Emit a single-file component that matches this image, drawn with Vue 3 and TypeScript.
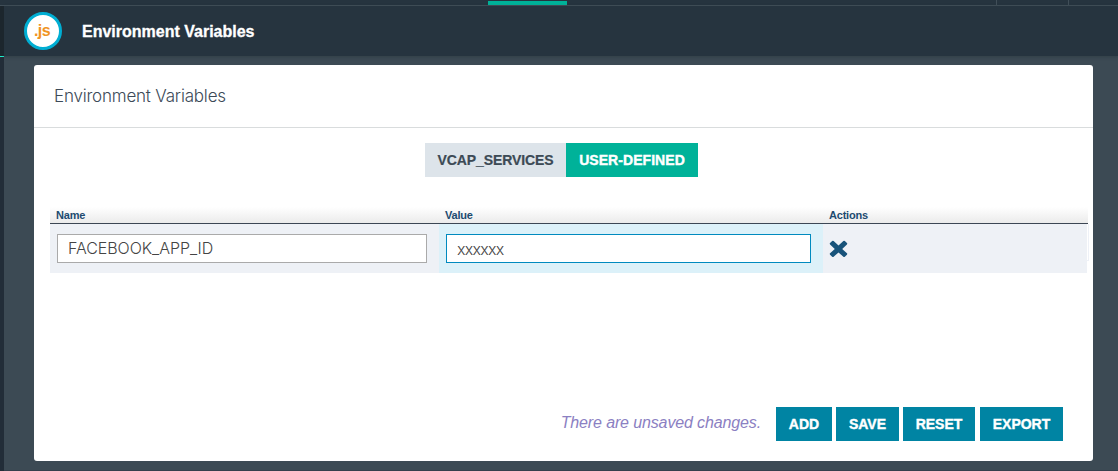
<script setup lang="ts">
import { ref } from 'vue'

interface EnvVar {
  name: string
  value: string
}

const tabs = ['VCAP_SERVICES', 'USER-DEFINED']
const activeTab = ref('USER-DEFINED')
const rows = ref<EnvVar[]>([{ name: 'FACEBOOK_APP_ID', value: 'xxxxxx' }])
const actions = ['ADD', 'SAVE', 'RESET', 'EXPORT']

function removeRow(index: number): void {
  rows.value.splice(index, 1)
}
</script>

<template>
  <div class="page">
    <div class="topbar">
      <span class="current"></span>
      <span class="cell"></span>
      <span class="cell last"></span>
    </div>
    <div class="below">
      <aside class="rail"><div class="rail-top"></div></aside>
      <div class="main">
        <header class="header">
          <div class="logo"><span>.js</span></div>
          <h1>Environment Variables</h1>
        </header>
        <main class="body">
          <section class="card">
            <h2><span>Environment Variables</span></h2>
            <div class="tabs">
              <button
                v-for="tab in tabs"
                :key="tab"
                :class="['tab', { active: tab === activeTab }]"
                @click="activeTab = tab"
              ><span>{{ tab }}</span></button>
            </div>
            <div class="table">
              <div class="thead">
                <span>Name</span><span>Value</span><span>Actions</span>
              </div>
              <div class="tbody">
                <div v-for="(row, i) in rows" :key="i" class="row">
                  <div class="td name"><input v-model="row.name" type="text" /></div>
                  <div class="td value"><input v-model="row.value" type="text" /></div>
                  <div class="td act">
                    <button class="remove" @click="removeRow(i)">
                      <svg width="19" height="18" viewBox="0 0 18 18" preserveAspectRatio="none">
                        <path d="M4.4 1.1 9 5.5l4.6-4.4q.7-.5 1.4 0l2 2q.6.7 0 1.4L12.5 9l4.5 4.3q.6.7 0 1.4l-2 2q-.7.6-1.4 0L9 12.4l-4.6 4.3q-.7.6-1.4 0l-2-2q-.6-.7 0-1.4L5.5 9 1 4.5q-.6-.7 0-1.4l2-2q.7-.5 1.4 0Z" />
                      </svg>
                    </button>
                  </div>
                </div>
                <div class="gutter"></div>
              </div>
            </div>
            <footer class="footer">
              <em>There are unsaved changes.</em>
              <button v-for="a in actions" :key="a" :class="['btn', a.toLowerCase()]"><span>{{ a }}</span></button>
            </footer>
          </section>
        </main>
      </div>
    </div>
  </div>
</template>

<style>
body {
  margin: 0;
}
</style>

<style scoped>
* {
  box-sizing: border-box;
}
.page {
  width: 1118px;
  height: 471px;
  overflow: hidden;
  display: flex;
  flex-direction: column;
  background: #3c4a54;
  font-family: "Liberation Sans", Arial, sans-serif;
}
button {
  border: 0;
  padding: 0;
  margin: 0;
  font-family: inherit;
}
.topbar {
  flex: none;
  height: 6px;
  display: flex;
  align-items: flex-start;
  background: #26343f;
  border-bottom: 1px solid #414f59;
}
.current {
  width: 79px;
  height: 4px;
  margin: 1px 429px 0 488px;
  background: #00b299;
}
.cell {
  width: 72px;
  height: 5px;
  border-left: 1px solid #414f59;
}
.last {
  width: 50px;
}
.below {
  flex: 1;
  display: flex;
}
.rail {
  flex: none;
  width: 4px;
  background: #222d38;
}
.rail-top {
  height: 51px;
  background: #1d272e;
  border-bottom: 1px solid #1ff0cf;
}
.main {
  flex: 1;
  display: flex;
  flex-direction: column;
}
.header {
  flex: none;
  height: 50px;
  display: flex;
  align-items: center;
  padding-left: 20px;
  background: #26343f;
  box-shadow: 0 1px 3px rgba(30, 42, 50, 0.35);
}
.logo {
  width: 38px;
  height: 38px;
  border: 3px solid #00aed3;
  border-radius: 50%;
  background: #fff;
  display: flex;
  align-items: center;
  justify-content: center;
  padding: 0 2px 1px 0;
  color: #f09424;
  font-size: 16px;
  font-weight: bold;
  line-height: 18px;
  letter-spacing: -0.6px;
}
h1 {
  margin: 0 0 0 20px;
  padding-top: 2px;
  color: #fff;
  font-size: 16px;
  line-height: 20px;
  -webkit-text-stroke: 0.3px currentColor;
}
.body {
  flex: 1;
  padding: 9px 25px 9px 30px;
  border-bottom: 1px solid #35404c;
}
.card {
  height: 396px;
  display: flex;
  flex-direction: column;
  background: #fff;
  border-radius: 3px;
}
h2 {
  flex: none;
  margin: 0;
  height: 63px;
  padding: 21px 20px 0;
  border-bottom: 1px solid #d9dcdd;
  color: #3c4a58;
  font-family: Inter, "Liberation Sans", sans-serif;
  font-size: 17px;
  font-weight: 300;
  line-height: 20px;
  letter-spacing: -0.2px;
}
.tabs {
  display: flex;
  margin: 15px 0 0 391px;
}
.tab {
  width: 141px;
  height: 34px;
  background: #dde4ea;
  color: #3c4a55;
  font-size: 14px;
  font-weight: bold;
  letter-spacing: -0.1px;
  white-space: nowrap;
  -webkit-text-stroke: 0.2px currentColor;
}
.tab.active {
  width: 132px;
  background: #00b299;
  color: #fff;
  letter-spacing: 0.05px;
  -webkit-text-stroke-width: 0.4px;
}
.table {
  margin: 30px 0 0 16px;
  width: 1039px;
}
.thead {
  width: 1038px;
  height: 17px;
  display: grid;
  grid-template-columns: 389px 384px 1fr;
  padding-left: 6px;
  border-bottom: 1px solid #3c4654;
  background: linear-gradient(#fff, #ebebeb);
  color: #1d4b70;
  font-size: 11px;
  font-weight: bold;
  line-height: 17px;
  letter-spacing: -0.2px;
}
.tbody {
  display: flex;
}
.row {
  width: 1037px;
  height: 49px;
  display: grid;
  grid-template-columns: 389px 384px 1fr;
  background: #eef1f6;
}
.td {
  padding: 10px 7px 0;
}
.value {
  background: #dcf1f9;
}
.act {
  padding: 16px 5px 0 6px;
}
.gutter {
  width: 2px;
  height: 37px;
  border: solid #eef1f7;
  border-width: 0 1px 1px 0;
}
input {
  display: block;
  width: 370px;
  height: 29px;
  margin: 0;
  padding: 0 10px 2px;
  border: 1px solid #aaa;
  border-radius: 0;
  outline: none;
  background: #fff;
  color: #444;
  font-family: Inter, "Liberation Sans", sans-serif;
  font-size: 16px;
  font-weight: 300;
  letter-spacing: -0.05px;
}
.value input {
  width: 365px;
  padding-bottom: 0;
  border-color: #008abf;
  letter-spacing: -0.75px;
}
.remove {
  display: block;
  width: 19px;
  height: 18px;
  background: none;
}
.remove svg {
  display: block;
  fill: #18537a;
}
.footer {
  display: flex;
  align-items: center;
  justify-content: flex-end;
  gap: 4px;
  margin-top: auto;
  padding: 0 30px 20px 0;
}
em {
  margin-right: 11px;
  padding-bottom: 2px;
  color: #8b80c2;
  font-size: 16px;
  line-height: 20px;
  letter-spacing: -0.13px;
}
.btn {
  height: 34px;
  background: #0084a3;
  color: #fff;
  font-size: 14px;
  font-weight: bold;
  -webkit-text-stroke: 0.4px currentColor;
}
.add {
  width: 56px;
}
.save {
  width: 63px;
}
.reset {
  width: 72px;
}
.export {
  width: 83px;
  margin-left: 1px;
}
</style>
